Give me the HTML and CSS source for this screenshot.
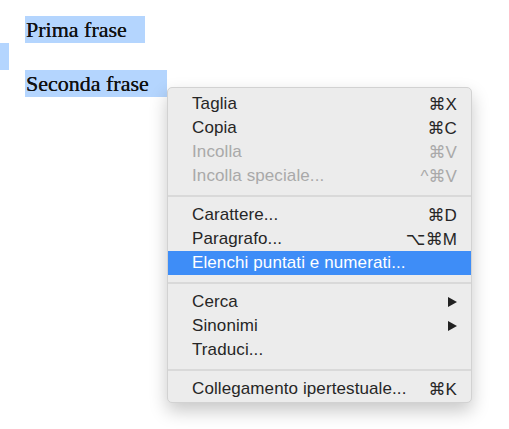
FILE: index.html
```html
<!DOCTYPE html>
<html lang="it">
<head>
    <meta charset="UTF-8">
    <meta name="viewport" content="width=device-width, initial-scale=1.0">
    <title>Menu contestuale</title>
    <link rel="stylesheet" href="styles.css">
</head>
<body>
    <div class="doc">
        <p class="line"><span class="sel">Prima frase</span></p>
        <p class="line"><span class="sel empty"></span></p>
        <p class="line"><span class="sel">Seconda frase</span></p>
    </div>

    <ul class="menu">
        <li class="item"><span>Taglia</span><span class="key">⌘X</span></li>
        <li class="item"><span>Copia</span><span class="key">⌘C</span></li>
        <li class="item disabled"><span>Incolla</span><span class="key">⌘V</span></li>
        <li class="item disabled"><span>Incolla speciale...</span><span class="key">^⌘V</span></li>
        <li class="sep"></li>
        <li class="item"><span>Carattere...</span><span class="key">⌘D</span></li>
        <li class="item"><span>Paragrafo...</span><span class="key">⌥⌘M</span></li>
        <li class="item active"><span>Elenchi puntati e numerati...</span></li>
        <li class="sep"></li>
        <li class="item"><span>Cerca</span>
            <svg class="arrow" width="9" height="10" viewBox="0 0 9 10"><polygon points="0,0 9,5 0,10"/></svg>
        </li>
        <li class="item"><span>Sinonimi</span>
            <svg class="arrow" width="9" height="10" viewBox="0 0 9 10"><polygon points="0,0 9,5 0,10"/></svg>
        </li>
        <li class="item"><span>Traduci...</span></li>
        <li class="sep"></li>
        <li class="item"><span>Collegamento ipertestuale...</span><span class="key">⌘K</span></li>
    </ul>
</body>
</html>
```

FILE: styles.css
```css
body {
    margin: 0;
    background-color: #ffffff;
}

.doc {
    padding-top: 16px;
    font-family: 'Liberation Serif', serif;
    font-size: 22px;
    color: #111111;
    text-shadow: 0 0 0.6px #111111;
}

.line {
    margin: 0;
    height: 27px;
    line-height: 27px;
}

.sel {
    display: inline-block;
    height: 27px;
    margin-left: 25px;
    padding: 0 18px 0 1px;
    background-color: #b4d5fe;
}

.sel.empty {
    margin-left: 0;
    padding: 0;
    width: 9px;
    vertical-align: top;
}

.menu {
    position: absolute;
    left: 167px;
    top: 87px;
    box-sizing: border-box;
    width: 305px;
    height: 316px;
    margin: 0;
    padding: 4px 0 3px;
    list-style: none;
    background-color: #ececec;
    border: 1px solid #d2d2d2;
    border-radius: 5px;
    box-shadow: 0 8px 18px rgba(0, 0, 0, 0.22);
    font-family: 'Liberation Sans', 'DejaVu Sans', sans-serif;
    font-size: 17px;
    letter-spacing: 0.1px;
    color: #262626;
}

.item {
    display: flex;
    justify-content: space-between;
    align-items: center;
    height: 24px;
    padding: 0 14px 0 24px;
}

.item.disabled {
    color: #a9a9a9;
}

.item.active {
    background-color: #3e8df7;
    color: #ffffff;
}

.key {
    font-family: 'Liberation Sans', 'DejaVu Sans', sans-serif;
}

.arrow {
    fill: #222222;
}

.sep {
    height: 15px;
    display: flex;
    align-items: center;
}

.sep::before {
    content: '';
    flex: 1;
    height: 2px;
    background-color: #d9d9d9;
}
```
